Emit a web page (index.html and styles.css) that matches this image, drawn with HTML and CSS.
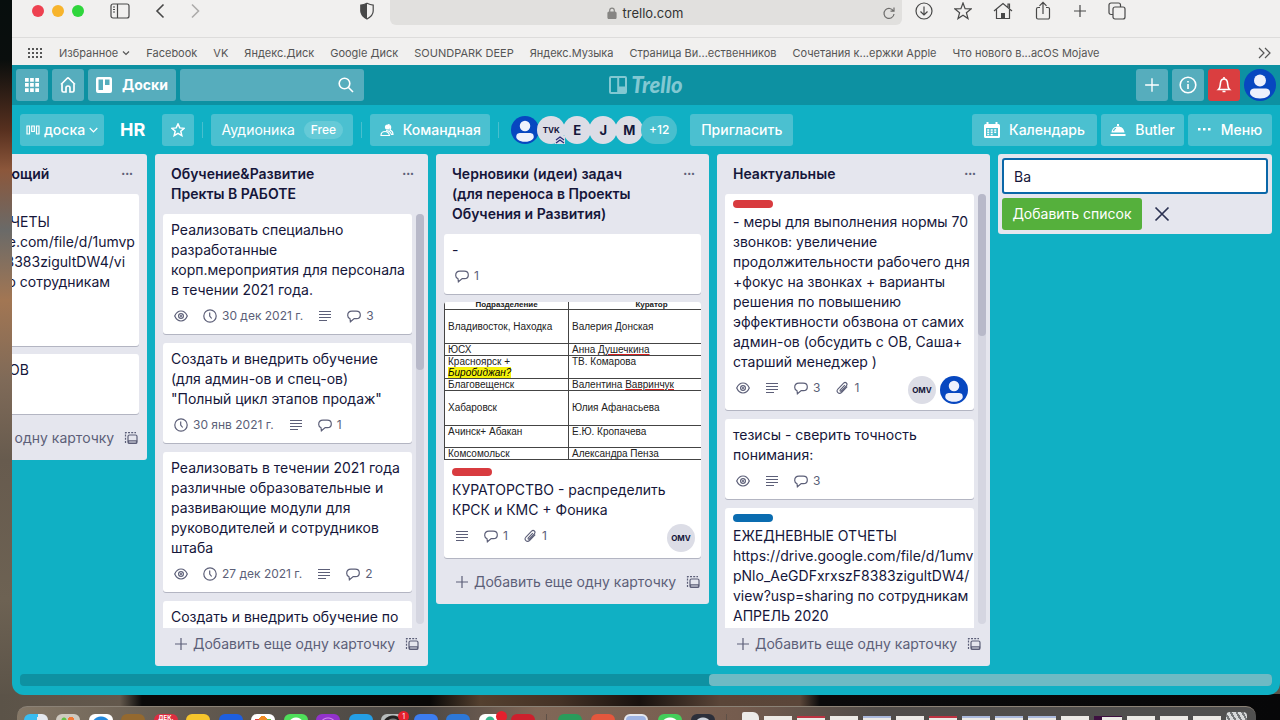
FILE: index.html
```html
<!DOCTYPE html>
<html lang="ru">
<head>
<meta charset="utf-8">
<title>HR | Trello</title>
<link rel="stylesheet" href="styles.css">
</head>
<body>
<svg class="sprite" aria-hidden="true">
  <symbol id="eye" viewBox="0 0 14 14"><path d="M.7 7C2.200 3.700 4.400 2 7 2S11.800 3.700 13.300 7C11.800 10.300 9.600 12 7 12S2.200 10.300.7 7z"/><circle cx="7" cy="7" r="2.400"/><circle cx="7" cy="7" r=".5"/></symbol>
  <symbol id="clock" viewBox="0 0 14 14"><circle cx="7" cy="7" r="6.200"/><path d="M6.700 3.500V7l2 2.500"/></symbol>
  <symbol id="desc" viewBox="0 0 14 14"><path d="M1 2.500h12M1 5.500h12M1 8.500h12M1 11.500h8"/></symbol>
  <symbol id="comment" viewBox="0 0 14 14"><path d="M3 9.700C1.500 9 .7 7.900.7 6.400.7 3.900 2.400 2.200 5 2.200h4.200c2.500 0 4.100 1.500 4.100 3.700s-1.600 3.700-3.900 3.700H7.200L3.400 12.800z"/></symbol>
  <symbol id="clip" viewBox="0 0 14 14"><path d="M9.800 4.200 5.300 8.900c-.8.800.3 1.800 1.100 1L11.300 4.800c1.900-2-.8-4.600-2.700-2.700L2.900 8c-2.300 2.600 1.100 5.900 3.600 3.500L12.200 5.600" stroke-width="1.100"/></symbol>
  <symbol id="plus" viewBox="0 0 14 14"><path d="M7 1v12M1 7h12"/></symbol>
  <symbol id="template" viewBox="0 0 14 14"><rect x="4" y="4" width="9" height="8.500" rx="1.500"/><path d="M4.500 9.800h8v2.200h-8z"/><path d="M1.500 12V1.700h10.500" stroke-dasharray="2 1.200"/></symbol>
  <symbol id="person" viewBox="0 0 32 32"><circle cx="16" cy="16" r="16" fill="#0747c0"/><circle cx="16" cy="11.500" r="6" fill="#eef1fc"/><path d="M6 24c0-3.500 2-4.500 5-4.500h10c3 0 5 1 5 4.500 0 2-3 5.500-10 5.500S6 26 6 24z" fill="#eef1fc"/></symbol>
</svg>

<div class="desktop">
  <main class="window">
    <div class="toolbar">
      <div class="tools tools-left">
        <div class="lights"><button class="light red" aria-label="Закрыть"></button><button class="light yellow" aria-label="Свернуть"></button><button class="light green" aria-label="Развернуть"></button></div>
        <button class="tool sidebar" aria-label="Боковая панель"><svg width="20" height="16" viewBox="0 0 20 16"><rect x="1" y="1" width="18" height="14" rx="2"/><path d="M7.500 1v14M3 4h2M3 6.500h2M3 9h2"/></svg></button>
        <button class="tool back" aria-label="Назад"><svg width="14" height="16" viewBox="0 0 14 16"><path d="M10.500 1.500 4 8l6.500 6.500"/></svg></button>
        <button class="tool forward" aria-label="Вперёд"><svg width="14" height="16" viewBox="0 0 14 16"><path d="M4 1.500 10.500 8 4 14.500"/></svg></button>
        <button class="tool shield" aria-label="Защита"><svg width="16" height="18" viewBox="0 0 16 18"><path d="M8 1.200c2 1 4 1.700 6.200 1.900V9c0 3.500-2.500 6-6.200 8-3.700-2-6.200-4.500-6.200-8V3.100C4 2.900 6 2.200 8 1.200z"/><path class="solid" d="M8 1.200V17c-3.700-2-6.200-4.500-6.200-8V3.100C4 2.900 6 2.200 8 1.200z"/></svg></button>
      </div>
      <div class="address">
        <svg class="lock" width="10" height="12" viewBox="0 0 10 12"><rect x="1" y="5" width="8" height="6.500" rx="1"/><path d="M2.700 5V3.500a2.300 2.300 0 0 1 4.600 0V5"/></svg>
        <span>trello.com</span>
        <button class="reload" aria-label="Обновить"><svg width="14" height="14" viewBox="0 0 14 14"><path d="M11.500 5.200A5 5 0 1 0 12 8M8.500 5.200H12V1.500"/></svg></button>
      </div>
      <div class="tools tools-right">
        <button class="tool" aria-label="Загрузки"><svg width="18" height="18" viewBox="0 0 18 18"><circle cx="9" cy="9" r="8"/><path d="M9 4.500v8.500M5.500 9.500 9 13l3.500-3.500"/></svg></button>
        <button class="tool" aria-label="В избранное"><svg width="18" height="18" viewBox="0 0 18 18"><path d="m9 1 2.100 5.700 6 .2-4.700 3.800 1.600 5.900L9 13.200l-5 3.400 1.600-5.900L.9 6.900l6-.2z"/></svg></button>
        <button class="tool" aria-label="Домой"><svg width="20" height="18" viewBox="0 0 20 18"><path d="M1 9 10 1.500 19 9M3.500 7.500V16.500h13V7.500M15 5V2h1.500v4"/><path class="solid" d="M8 11h4v5.500H8z"/></svg></button>
        <button class="tool" aria-label="Поделиться"><svg width="18" height="20" viewBox="0 0 18 20"><path d="M6 6.500H4a1.500 1.500 0 0 0-1.500 1.500v8.500A1.500 1.500 0 0 0 4 18h10a1.500 1.500 0 0 0 1.500-1.500V8A1.500 1.500 0 0 0 14 6.500H12M9 13V1.500M5.500 4.800 9 1.300l3.500 3.500"/></svg></button>
        <button class="tool" aria-label="Новая вкладка"><svg width="14" height="14" viewBox="0 0 14 14"><use href="#plus"/></svg></button>
        <button class="tool" aria-label="Обзор вкладок"><svg width="18" height="18" viewBox="0 0 18 18"><rect x="5" y="5" width="12" height="12" rx="2"/><path d="M5 12.500H3a2 2 0 0 1-2-2V3a2 2 0 0 1 2-2h7.500a2 2 0 0 1 2 2v2"/></svg></button>
      </div>
    </div>
    <nav class="bookmarks">
      <svg class="grid-dots" width="14" height="10" viewBox="0 0 14 10"><path d="M0 1h14M0 5h14M0 9h14" stroke-dasharray="2 2"/></svg>
      <a href="#">Избранное<svg class="caret" width="8" height="6" viewBox="0 0 8 6"><path d="m1 1.500 3 3 3-3"/></svg></a>
      <a href="#">Facebook</a><a href="#">VK</a><a href="#">Яндекс.Диск</a><a href="#">Google Диск</a><a href="#">SOUNDPARK DEEP</a><a href="#">Яндекс.Музыка</a><a href="#">Страница Ви...ественников</a><a href="#">Сочетания к...ержки Apple</a><a href="#">Что нового в...acOS Mojave</a>
      <svg class="more" width="13" height="12" viewBox="0 0 13 12"><path d="m1 1 5 5-5 5M7 1l5 5-5 5"/></svg>
    </nav>

    <header class="app-header">
      <div class="group">
        <button class="hbtn square" aria-label="Приложения"><svg width="14" height="14" viewBox="0 0 14 14"><path class="solid" d="M0 0h3.700v3.700H0zM5.100 0h3.700v3.700H5.100zM10.300 0H14v3.700h-3.700zM0 5.100h3.700v3.700H0zM5.100 5.100h3.700v3.700H5.100zM10.300 5.100H14v3.700h-3.700zM0 10.300h3.700V14H0zM5.100 10.300h3.700V14H5.100zM10.300 10.300H14V14h-3.700z"/></svg></button>
        <button class="hbtn square" aria-label="Главная"><svg width="16" height="16" viewBox="0 0 16 16"><path d="M1 7.500 7 1.500q1-1 2 0l6 6M2 7v6.500Q2 15 3.500 15H6v-4q0-2 2-2t2 2v4h2.500Q14 15 14 13.500V7" stroke-width="1.700"/></svg></button>
        <button class="hbtn boards"><svg width="16" height="16" viewBox="0 0 16 16"><path class="solid" fill-rule="evenodd" d="M2 0h12q2 0 2 2v12q0 2-2 2H2q-2 0-2-2V2Q0 0 2 0zM2.500 2.500v10.500H7V2.500zM9 2.500V8h4.500V2.500z"/></svg>Доски</button>
        <label class="search"><input type="search" aria-label="Поиск"><svg width="16" height="16" viewBox="0 0 16 16"><circle cx="6.500" cy="6.500" r="5.300" stroke-width="1.600"/><path d="m10.500 10.500 4.500 4.500" stroke-width="1.600"/></svg></label>
      </div>
      <a class="logo" href="#"><svg width="18" height="18" viewBox="0 0 18 18"><rect x="1" y="1" width="16" height="16" rx="1"/><path d="M9.200 1v16"/><path class="solid" d="M10 10.500h7V17h-7z"/></svg><span>Trello</span></a>
      <div class="group end">
        <button class="hbtn square" aria-label="Создать"><svg width="16" height="16" viewBox="0 0 14 14"><use href="#plus"/></svg></button>
        <button class="hbtn square" aria-label="Информация"><svg class="info" width="18" height="18" viewBox="0 0 18 18"><circle cx="9" cy="9" r="7.800"/><path d="M9 8v5M9 5v1.500"/></svg></button>
        <button class="hbtn square alert" aria-label="Уведомления"><svg width="16" height="18" viewBox="0 0 16 18"><path d="M2.500 13.500c1.700-1.500 1.700-3 1.900-6C4.600 4.500 6 3 8 3s3.400 1.500 3.600 4.500c.2 3 .2 4.500 1.900 6zM8 1v2M6.500 15.500h3" stroke-width="1.600"/></svg></button>
        <button class="avatar-btn" aria-label="Профиль"><svg width="32" height="32"><use href="#person"/></svg></button>
      </div>
    </header>

    <section class="board-bar">
      <div class="bar-left">
        <button class="bbtn view"><svg width="14" height="10" viewBox="0 0 14 10"><path d="M1 1h2.500v8H1zM5.700 1h2.600v5.500H5.700zM10.500 1H13v8h-2.500z"/></svg>доска<svg width="9" height="6" viewBox="0 0 9 6"><path d="m.7 1 3.800 3.800L8.300 1"/></svg></button>
        <h1>HR</h1>
        <button class="bbtn square" aria-label="В избранное"><svg class="star" width="14" height="14" viewBox="0 0 14 14"><path d="m7 .9 1.800 4 4.300.4-3.300 2.900 1 4.400L7 10.400l-3.800 2.200 1-4.400L.9 5.300l4.300-.4z"/></svg></button>
        <i class="divider"></i>
        <button class="bbtn team">Аудионика<span class="free">Free</span></button>
        <i class="divider"></i>
        <button class="bbtn visibility"><svg width="14" height="14" viewBox="0 0 14 14"><circle cx="7.500" cy="4" r="2.600" class="solid"/><path d="M1 12.500c0-2.500 1.500-4 4-4s4 1.500 4.500 4zM6 7.500c3 0 4.500 1.500 5.500 4H13c0-3-1.500-4-3-4.500 1.500-2.500.5-5.500-2-5.500"/></svg>Командная</button>
        <i class="divider"></i>
        <div class="people">
          <svg width="28" height="28"><use href="#person"/></svg>
          <span class="face small">TVK<svg class="admin" width="10" height="8" viewBox="0 0 10 8"><path d="m1 4 4-3 4 3M1 7l4-3 4 3"/></svg></span>
          <span class="face">E</span><span class="face">J</span><span class="face">M</span><span class="face extra">+12</span>
        </div>
        <button class="bbtn invite">Пригласить</button>
      </div>
      <div class="bar-right">
        <button class="bbtn calendar"><svg width="16" height="16" viewBox="0 0 16 16"><path class="solid" fill-rule="evenodd" d="M2.500 0h2v2h7V0h2v2h1Q16 2 16 3.500v11q0 1.500-1.500 1.500h-13Q0 16 0 14.500v-11Q0 2 1.500 2h1zM2 6v8h12V6z"/><path d="M3.200 8h10M3.200 10.200h10M3.200 12.400h7" stroke-width="1.500" stroke-dasharray="2 1.500"/></svg>Календарь</button>
        <button class="bbtn butler"><svg width="16" height="14" viewBox="0 0 16 14"><path class="solid" d="M1.500 9.500C2 5.500 4.500 3.500 8 3.500s6 2 6.500 6zM7 1h2v2H7zM.5 11h15v2H.5z"/><path d="M3.500 8c.5-1.500 1.300-2.300 2.500-2.700" stroke="#4bc0d0"/></svg>Butler</button>
        <button class="bbtn menu"><svg width="13" height="3" viewBox="0 0 13 3"><path class="solid" d="M0 0h2.500v2.500H0zM5 0h2.500v2.500H5zM10 0h2.500v2.500H10z"/></svg>Меню</button>
      </div>
    </section>

    <section class="canvas">
      <article class="list">
        <header><h2 class="cut-title">ющий</h2><button class="dots" aria-label="Действия">•••</button></header>
        <div class="list-body"><div class="cards">
          <div class="card"><i class="label blue"></i><p class="cut-lines">ЕЖЕДНЕВНЫЕ ОТЧЕТЫ<br>https://drive.google.com/file/d/1umvp<br>Nlo_AeGDFxrxszF8383zigultDW4/vi<br>ew?usp=sharing по сотрудникам<br>АПРЕЛЬ 2020</p><div class="foot"></div></div>
          <div class="card"><p class="cut-text">ОВ</p><div class="foot"></div></div>
        </div></div>
        <footer><button class="add"><svg width="14" height="14"><use href="#plus"/></svg>Добавить еще одну карточку</button><button class="tpl" aria-label="Шаблон"><svg width="14" height="14"><use href="#template"/></svg></button></footer>
      </article>

      <article class="list">
        <header><h2>Обучение&amp;Развитие<br>Пректы В РАБОТЕ</h2><button class="dots" aria-label="Действия">•••</button></header>
        <div class="list-body"><div class="cards">
          <div class="card"><p>Реализовать специально<br>разработанные<br>корп.мероприятия для персонала<br>в течении 2021 года.</p><div class="foot"><div class="badges"><span><svg width="14" height="14"><use href="#eye"/></svg></span><span><svg width="14" height="14"><use href="#clock"/></svg>30 дек 2021 г.</span><span><svg width="14" height="14"><use href="#desc"/></svg></span><span><svg width="14" height="14"><use href="#comment"/></svg>3</span></div></div></div>
          <div class="card"><p>Создать и внедрить обучение<br>(для админ-ов и спец-ов)<br>"Полный цикл этапов продаж"</p><div class="foot"><div class="badges"><span><svg width="14" height="14"><use href="#clock"/></svg>30 янв 2021 г.</span><span><svg width="14" height="14"><use href="#desc"/></svg></span><span><svg width="14" height="14"><use href="#comment"/></svg>1</span></div></div></div>
          <div class="card"><p>Реализовать в течении 2021 года<br>различные образовательные и<br>развивающие модули для<br>руководителей и сотрудников<br>штаба</p><div class="foot"><div class="badges"><span><svg width="14" height="14"><use href="#eye"/></svg></span><span><svg width="14" height="14"><use href="#clock"/></svg>27 дек 2021 г.</span><span><svg width="14" height="14"><use href="#desc"/></svg></span><span><svg width="14" height="14"><use href="#comment"/></svg>2</span></div></div></div>
          <div class="card"><p>Создать и внедрить обучение по</p><div class="foot"></div></div>
        </div><div class="track"><div class="thumb" style="height:38%"></div></div></div>
        <footer><button class="add"><svg width="14" height="14"><use href="#plus"/></svg>Добавить еще одну карточку</button><button class="tpl" aria-label="Шаблон"><svg width="14" height="14"><use href="#template"/></svg></button></footer>
      </article>

      <article class="list">
        <header><h2>Черновики (идеи) задач<br>(для переноса в Проекты<br>Обучения и Развития)</h2><button class="dots" aria-label="Действия">•••</button></header>
        <div class="list-body"><div class="cards">
          <div class="card"><p>-</p><div class="foot"><div class="badges"><span><svg width="14" height="14"><use href="#comment"/></svg>1</span></div></div></div>
          <div class="card">
            <table class="cover">
              <tr class="head"><th>Подразделение</th><th>Куратор</th></tr>
              <tr class="tall"><td>Владивосток, Находка</td><td>Валерия Донская</td></tr>
              <tr><td>ЮСХ</td><td>Анна <u>Душечкина</u></td></tr>
              <tr class="double"><td>Красноярск +<br><mark>Биробиджан?</mark></td><td>ТВ. Комарова</td></tr>
              <tr><td>Благовещенск</td><td>Валентина <u>Вавринчук</u></td></tr>
              <tr class="tall"><td>Хабаровск</td><td>Юлия Афанасьева</td></tr>
              <tr class="double"><td>Ачинск+ Абакан</td><td>Е.Ю. Кропачева</td></tr>
              <tr><td>Комсомольск</td><td>Александра Пенза</td></tr>
            </table>
            <i class="label"></i><p>КУРАТОРСТВО - распределить<br>КРСК и КМС + Фоника</p><div class="foot"><div class="badges"><span><svg width="14" height="14"><use href="#desc"/></svg></span><span><svg width="14" height="14"><use href="#comment"/></svg>1</span><span><svg width="14" height="14"><use href="#clip"/></svg>1</span></div><div class="members"><span class="face small">OMV</span></div></div></div>
        </div></div>
        <footer><button class="add"><svg width="14" height="14"><use href="#plus"/></svg>Добавить еще одну карточку</button><button class="tpl" aria-label="Шаблон"><svg width="14" height="14"><use href="#template"/></svg></button></footer>
      </article>

      <article class="list">
        <header><h2>Неактуальные</h2><button class="dots" aria-label="Действия">•••</button></header>
        <div class="list-body"><div class="cards">
          <div class="card"><i class="label"></i><p>- меры для выполнения нормы 70<br>звонков: увеличение<br>продолжительности рабочего дня<br>+фокус на звонках + варианты<br>решения по повышению<br>эффективности обзвона от самих<br>админ-ов (обсудить с ОВ, Саша+<br>старший менеджер )</p><div class="foot"><div class="badges"><span><svg width="14" height="14"><use href="#eye"/></svg></span><span><svg width="14" height="14"><use href="#desc"/></svg></span><span><svg width="14" height="14"><use href="#comment"/></svg>3</span><span><svg width="14" height="14"><use href="#clip"/></svg>1</span></div><div class="members"><span class="face small">OMV</span><svg width="28" height="28"><use href="#person"/></svg></div></div></div>
          <div class="card"><p>тезисы - сверить точность<br>понимания:</p><div class="foot"><div class="badges"><span><svg width="14" height="14"><use href="#eye"/></svg></span><span><svg width="14" height="14"><use href="#desc"/></svg></span><span><svg width="14" height="14"><use href="#comment"/></svg>3</span></div></div></div>
          <div class="card"><i class="label blue"></i><p>ЕЖЕДНЕВНЫЕ ОТЧЕТЫ<br>https://drive.google.com/file/d/1umv<br>pNlo_AeGDFxrxszF8383zigultDW4/<br>view?usp=sharing по сотрудникам<br>АПРЕЛЬ 2020</p><div class="foot"></div></div>
        </div><div class="track"><div class="thumb" style="height:33%"></div></div></div>
        <footer><button class="add"><svg width="14" height="14"><use href="#plus"/></svg>Добавить еще одну карточку</button><button class="tpl" aria-label="Шаблон"><svg width="14" height="14"><use href="#template"/></svg></button></footer>
      </article>

      <form class="composer">
        <input type="text" value="Ва" aria-label="Название списка">
        <div><button class="submit" type="button">Добавить список</button><button class="cancel" type="button" aria-label="Отмена"><svg width="16" height="16" viewBox="0 0 16 16"><path d="m1.500 1.500 13 13m0-13-13 13"/></svg></button></div>
      </form>
    </section>
    <div class="hscroll"><div class="hthumb" style="width:45%"></div></div>
  </main>

  <div class="dock">
    <div class="apps main-apps">
      <i class="app finder"></i><i class="app launchpad"></i><i class="app safari"></i><i class="app contacts"></i><i class="app cal">ДЕК.</i><i class="app notes"></i><i class="app mail"></i><i class="app photos"></i><i class="app messages"></i><i class="app podcasts"></i><i class="app store"></i><i class="app prefs"><b>1</b></i><i class="app zoom"></i><i class="app word"></i><i class="app slack"><b></b></i><i class="app flash"></i>
    </div>
    <i class="sep"></i>
    <div class="apps office"><i class="app excel"></i><i class="app ppt"></i><i class="app preview"></i><i class="app whats"></i><i class="app quick"></i></div>
    <i class="sep"></i>
    <div class="apps files"><i class="doc"></i><i class="win"></i><i class="win redtop"></i><i class="win"></i><i class="win bluetop"></i><i class="win"></i><i class="win redtop"></i><i class="win bluetop"></i><i class="win bluetop"></i><i class="win bluetop"></i><i class="win"></i><i class="win purple"></i><i class="win"></i><i class="win"></i><i class="win"></i><i class="trash"></i></div>
  </div>
</div>
</body>
</html>
```
FILE: styles.css
```css
* { box-sizing: border-box; }
body { margin: 0; font-family: Inter, "Liberation Sans", sans-serif; font-size: 14px; line-height: 20px; color: #15163a; }
button, input { font: inherit; color: inherit; border: 0; padding: 0; background: none; }
button { display: inline-flex; align-items: center; justify-content: center; }
h1, h2, p { margin: 0; }
a { color: inherit; text-decoration: none; }
svg { display: block; flex: none; fill: none; stroke: currentColor; stroke-width: 1.2; }
.solid { fill: currentColor; stroke: none; }
.sprite { position: absolute; width: 0; height: 0; }

.desktop { height: 100vh; overflow: hidden; display: flex; flex-direction: column; gap: 11px; padding-left: 12px;
  background: linear-gradient(90deg, #5b5348 0, #63584c 120px, #0a0909 142px, #090807 430px, #54402f 480px, #453226 560px, #18110e 640px, #5a4538 720px, #5b4639 800px, #0a0a0b 820px, #070708 1280px) bottom / 100% 26px no-repeat,
  linear-gradient(180deg, #070e0d 0, #0a0e0d 60px, #57301f 130px, #8c573b 170px, #6a6a68 230px, #a27653 300px, #7f6a58 380px, #675b4e 460px, #6d6253 600px, #5b5348 700px); }

/* Browser window */
.window { flex: 1; min-height: 0; display: flex; flex-direction: column; overflow: hidden; background: #10b0c4; border-radius: 0 0 12px 12px; }
.toolbar { display: flex; align-items: flex-start; padding-bottom: 12px; background: #f1f0ef; color: #484848; border-bottom: 1px solid #dddcdb; }
.tools { width: 378px; flex: none; height: 22px; display: flex; align-items: center; }
.tools-left { padding: 0 15px 0 20px; }
.tools-right { padding-left: 13px; gap: 21px; }
.lights { display: flex; gap: 8px; }
.light { width: 12px; height: 12px; border-radius: 50%; }
.red { background: #ee4150; }
.yellow { background: #f7b42c; }
.green { background: #2fd63c; }
.sidebar { margin-left: 26px; }
.back { margin-left: 23px; }
.forward { margin-left: 21px; color: #adacab; }
.shield { margin-left: auto; }
.back svg, .forward svg { stroke-width: 1.6; }
.address { flex: 1; height: 25px; display: flex; align-items: center; justify-content: center; gap: 6px; padding-left: 18px; background: #e1e0de; border-radius: 0 0 6px 6px; font-size: 13px; color: #333; }
.lock { color: #868583; }
.lock rect { fill: currentColor; }
.reload { margin-left: auto; padding-right: 6px; color: #6d6c6b; }
.address::before { content: ""; margin-right: auto; }
.bookmarks { flex: none; height: 27px; display: flex; align-items: center; gap: 16px; padding: 2px 9px 0 16px; background: #f1f0ef; color: #555; font-size: 11px; white-space: nowrap; }
.bookmarks a { display: flex; align-items: center; gap: 4px; }
.grid-dots { stroke-width: 2; margin-right: 1px; }
.more { margin-left: auto; }

/* Trello header */
.app-header { flex: none; display: grid; grid-template-columns: 1fr auto 1fr; align-items: center; padding: 4px; height: 40px; background: #0d91a2; color: #fff; }
.group { display: flex; gap: 4px; }
.end { justify-content: flex-end; }
.hbtn { height: 32px; border-radius: 3px; background: #56adbd; font-weight: 700; }
.info { stroke-width: 1.6; }
.square { width: 32px; }
.boards { gap: 10px; padding: 0 8px; }
.alert { background: #da3e40; }
.avatar-btn svg, .people > svg, .members > svg { stroke: none; }
.search { width: 184px; height: 32px; display: flex; align-items: center; padding-right: 10px; border-radius: 3px; background: #56adbd; }
.search input { flex: 1; min-width: 0; outline: 0; appearance: none; }
.logo { display: flex; align-items: center; gap: 4px; color: #82c8d2; font: italic 900 22px/24px Lato, sans-serif; }
.logo svg { stroke-width: 2; }

.board-bar { flex: none; height: 49px; display: flex; justify-content: space-between; padding: 8px; color: #fff; }
.bar-left, .bar-right { display: flex; align-items: center; }
.bar-right { gap: 4px; }
.bbtn { height: 32px; border-radius: 3px; background: #4bc0d0; white-space: nowrap; font-weight: 500; }
.view { width: 84px; gap: 4px; }
.star { stroke-width: 1.5; }
.board-bar h1 { font-size: 18px; line-height: 24px; margin: 0 17px 0 16px; }
.divider { width: 1px; height: 16px; margin: 0 8px; background: #48bfce; }
.team { width: 142px; gap: 9px; font-weight: 400; }
.free { padding: 0 7px; border-radius: 10px; background: #65cad7; font-size: 12px; line-height: 18px; font-weight: 500; }
.visibility { width: 120px; gap: 9px; }
.people { display: flex; align-items: center; margin: 0 13px 0 4px; }
.face { position: relative; width: 28px; height: 28px; border-radius: 50%; display: flex; align-items: center; justify-content: center; background: #dcdde6; color: #15163a; font-size: 13px; font-weight: 700; }
.small { font-size: 8px; }
.people .face { margin-left: -2px; }
.people .extra { width: 36px; border-radius: 14px; background: #48bfce; color: #fff; font-size: 12px; font-weight: 500; }
.admin { position: absolute; right: 0; bottom: 0; color: #2b2a76; background: #dcdde6; }
.invite { width: 103px; }
.calendar { width: 125px; gap: 9px; }
.butler { width: 83px; gap: 9px; }
.menu { width: 84px; gap: 10px; }

/* Lists */
.canvas { flex: 1; min-height: 0; display: flex; align-items: flex-start; justify-content: flex-end; gap: 8px; padding: 0 8px; }
.list { width: 273px; flex: none; max-height: 100%; display: flex; flex-direction: column; background: #e5e6ee; border-radius: 3px; }
.list header { flex: none; display: flex; justify-content: space-between; align-items: flex-start; padding: 10px 14px 10px 16px; }
.list h2 { font-size: 14px; line-height: 20px; font-weight: 600; }
.dots { color: #5c5f78; font-size: 7px; height: 20px; }
.list-body { flex: 0 1 auto; min-height: 0; display: flex; gap: 4px; padding: 0 8px; }
.list-body:has(.track) { padding-right: 4px; }
.cards { flex: 1; min-width: 0; overflow: hidden; display: flex; flex-direction: column; gap: 8px; padding-bottom: 8px; }
.card { flex: none; padding-top: 6px; background: #fff; border-radius: 3px; box-shadow: 0 1px 0 #b3b5c2; overflow: hidden; }
.list-body:has(.track) .card { margin-bottom: 1px; }
.card p { padding: 0 8px; white-space: nowrap; }
.label { display: block; width: 40px; height: 8px; margin: 0 8px 4px; border-radius: 4px; background: #d83b3f; }
.blue { background: #0a6cb0; }
.foot { min-height: 34px; display: flex; justify-content: space-between; align-items: flex-start; padding: 0 6px 0 11px; color: #5c5f78; }
.badges { height: 20px; margin-top: 6px; display: flex; gap: 15px; font-size: 12px; }
.badges span { display: flex; align-items: center; gap: 5px; }
.members { display: flex; gap: 4px; padding: 4px 0 6px; }
.track { width: 8px; margin-bottom: 4px; border-radius: 4px; background: #d5d6e1; }
.thumb { border-radius: 4px; background: #b8b9c9; }
.list footer { flex: none; height: 38px; display: flex; justify-content: space-between; align-items: flex-start; padding: 6px 9px 0 19px; color: #5c5f78; }
.add { gap: 5px; white-space: nowrap; }
.tpl { height: 20px; }
.list .cut-title { padding-left: 118px; }
.card .cut-lines { padding-left: 4px; }
.card .cut-text { padding-left: 127px; }

.cover { width: 100%; margin: -6px 0 8px; height: 158px; border-collapse: collapse; table-layout: fixed; font: 10px/11px "Liberation Sans", sans-serif; color: #222; }
.cover th, .cover td { border: 1px solid #444; border-right: 0; padding: 0 3px; text-align: left; white-space: nowrap; height: 11px; }
.cover th:first-child { width: 124px; }
.cover th { height: 7px; border-top: 0; text-align: center; font-size: 8px; line-height: 6px; }
.cover th:last-child { padding-left: 36px; }
.cover .tall td { height: 34px; }
.cover .double td { height: 22px; vertical-align: top; }
.cover u { text-decoration-color: #d42020; }
.cover mark { background: #f5f20c; font-style: italic; }

.composer { width: 274px; flex: none; padding: 4px; background: #e5e6ee; border-radius: 3px; }
.composer input { display: block; width: 100%; height: 36px; padding: 0 10px; border: 2px solid #0a67a8; border-radius: 3px; background: #fff; outline: 0; }
.composer div { display: flex; align-items: center; gap: 12px; margin-top: 4px; }
.submit { height: 32px; width: 140px; border-radius: 3px; background: #55b03c; color: #fff; }
.cancel { color: #2b3152; }
.cancel svg { stroke-width: 1.7; }
.hscroll { flex: none; height: 12px; margin: 8px 8px 9px; display: flex; justify-content: flex-end; border-radius: 4px; background: #0e91a2; }
.hthumb { border-radius: 4px; background: #6ebac4; }

/* Dock */
.dock { flex: none; height: 14px; margin: 0 24px 0 5px; padding: 7px 9px 0 7px; display: flex; gap: 11px; overflow: hidden; border-radius: 10px 10px 0 0; border-top: 1px solid #8b8276; background: linear-gradient(90deg, #857867 0, #62594f 180px, #494643 400px, #806757 520px, #755c4e 720px, #504c49 860px, #505050 1240px); }
.apps { display: flex; justify-content: space-between; }
.main-apps { flex: 513 1 0; }
.office { flex: 157 1 0; }
.files { flex: 507 1 0; padding-left: 4px; }
.sep { width: 1px; background: #5e5047; }
.app { position: relative; width: 24px; height: 24px; border-radius: 6px; }
.finder { background: linear-gradient(100deg, #39bdf1 50%, #e5e9ef 50%); }
.launchpad { background: radial-gradient(circle at 8px 6px, #62c144 2px, transparent 3px), radial-gradient(circle at 15px 6px, #f27a36 3px, transparent 3px), #cfcac0; }
.safari { background: radial-gradient(circle, #2389dd 9px, #fff 10px); }
.contacts { background: #94692f; }
.cal { background: linear-gradient(#de2d40 8px, #fff 8px); color: #fff; font: 700 6px/7px Inter, sans-serif; text-align: center; }
.notes { background: linear-gradient(#f6c52c 7px, #fff 7px); }
.mail { background: #1e5fe0; }
.photos { background: radial-gradient(circle at 12px 6px, #f08c24 4px, transparent 4px), radial-gradient(circle at 6px 9px, #e03c3c 4px, transparent 4px), radial-gradient(circle at 18px 9px, #6bbd3f 4px, transparent 4px), #fff; }
.messages { background: radial-gradient(circle at 12px 11px, #fff 7px, #4fdf5a 8px); }
.podcasts { background: radial-gradient(circle, #d38cf0 3px, #9232cc 4px 7px, #d38cf0 8px, #9232cc 9px); }
.store { background: #249fe6; }
.prefs { background: radial-gradient(circle, #777 7px, #222 8px 10px, #b7bcbc 11px); }
.app b { position: absolute; right: -4px; top: -3px; width: 11px; height: 11px; border-radius: 50%; background: #e5202d; color: #fff; font: 7px/11px Inter, sans-serif; text-align: center; }
.zoom { background: #3c7df0; }
.word { background: #2d78d8; }
.slack { background: radial-gradient(circle at 11px 7px, #37b890 4px, #fff 5px); }
.flash { background: #cd1f2c; }
.excel { background: #2a9c5b; }
.ppt { background: #e4573d; }
.preview { background: #9fb5e4; border: 2px solid #e6e8ee; }
.whats { background: radial-gradient(circle at 12px 13px, #fff 9px, #44cf5b 10px); }
.quick { background: radial-gradient(circle, #cdd3dc 8px, #2c2f3a 9px); }
.doc { width: 17px; height: 20px; margin-top: -2px; background: #ecebe9; border-radius: 2px 6px 0 0; }
.win { width: 28px; height: 12px; margin-top: 2px; background: #eceae6; }
.redtop { border-top: 2px solid #bd3342; }
.bluetop { border-top: 2px solid #aab9dc; }
.purple { border-left: 8px solid #3d1040; border-top: 1px solid #3d1040; }
.trash { width: 21px; height: 20px; margin-top: -2px; border-radius: 4px; background: repeating-linear-gradient(60deg, #d7d9da 0 3px, #75787a 3px 5px); }
```
